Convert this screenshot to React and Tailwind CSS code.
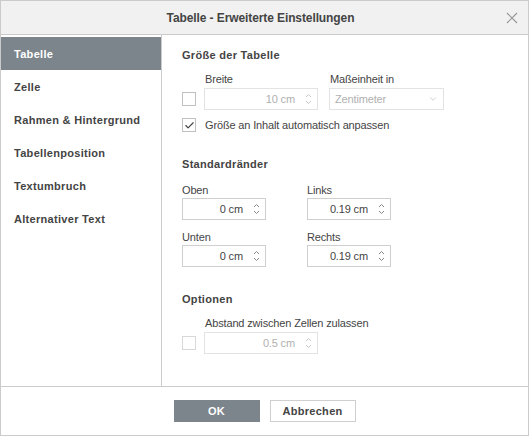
import { ChevronDown, Check } from 'lucide-react';

const menu = ['Tabelle', 'Zelle', 'Rahmen & Hintergrund', 'Tabellenposition', 'Textumbruch', 'Alternativer Text'];

function Spin({ value, width = 'w-[84px]', disabled = false }) {
  return (
    <div
      className={`flex items-center h-[22px] ${width} border ${
        disabled ? 'border-[#e3e3e3] text-[#b0b0b0]' : 'border-[#cfcfcf] text-[#444]'
      } bg-white`}
    >
      <span className="flex-1 text-right pr-[6px]">{value}</span>
      <div className={`flex flex-col items-center justify-center w-[14px] mr-[2px] leading-none ${disabled ? 'text-[#c8c8c8]' : 'text-[#888]'}`}>
        <svg width="7" height="5" viewBox="0 0 7 5"><path d="M1 4 L3.5 1.5 L6 4" fill="none" stroke="currentColor" strokeWidth="1" /></svg>
        <svg width="7" height="5" viewBox="0 0 7 5" className="mt-[2px]"><path d="M1 1 L3.5 3.5 L6 1" fill="none" stroke="currentColor" strokeWidth="1" /></svg>
      </div>
    </div>
  );
}

function Box({ checked = false, disabled = false }) {
  return (
    <div
      className={`w-[14px] h-[14px] border flex items-center justify-center bg-white ${
        disabled ? 'border-[#d8d8d8]' : 'border-[#c0c0c0]'
      }`}
    >
      {checked && <Check size={11} strokeWidth={2.5} className="text-[#444]" />}
    </div>
  );
}

export default function App() {
  return (
    <div
      className="w-[529px] h-[436px] bg-white border border-[#cbcbcb] flex flex-col text-[11px] leading-[14px] text-[#444] tracking-[-0.15px]"
      style={{ fontFamily: '"Liberation Sans", Arial, sans-serif' }}
    >
      <div className="h-[34px] shrink-0 bg-[#f1f1f1] border-b border-[#cbcbcb] flex items-center relative">
        <div className="flex-1 text-center pr-[8px] font-bold text-[12px] tracking-[-0.1px] text-[#444]">Tabelle - Erweiterte Einstellungen</div>
        <svg className="absolute right-[10px] top-[11px]" width="12" height="12" viewBox="0 0 12 12">
          <path d="M1 1 L11 11 M11 1 L1 11" stroke="#999" strokeWidth="1.2" />
        </svg>
      </div>

      <div className="flex flex-1 border-b border-[#cbcbcb]">
        <div className="w-[161px] border-r border-[#cbcbcb] pt-[2px]">
          {menu.map((m, i) => (
            <div
              key={m}
              className={`h-[33px] flex items-center pl-[13px] font-bold tracking-[0.3px] ${
                i === 0 ? 'bg-[#7d858c] text-white' : 'text-[#444]'
              }`}
            >
              {m}
            </div>
          ))}
        </div>

        <div className="flex-1 pl-[20px] pt-[13px]">
          <div className="font-bold tracking-[0.3px]">Größe der Tabelle</div>
          <div className="flex mt-[10px]">
            <div className="w-[23px]" />
            <div className="w-[125px]">Breite</div>
            <div>Maßeinheit in</div>
          </div>
          <div className="flex items-center mt-[2px]">
            <div className="w-[22px]"><Box /></div>
            <Spin value="10 cm" width="w-[114px]" disabled />
            <div className="ml-[11px] w-[115px] h-[22px] border border-[#e3e3e3] flex items-center pl-[5px] text-[#b0b0b0]">
              <span className="flex-1">Zentimeter</span>
              <ChevronDown size={10} className="mr-[5px] text-[#c8c8c8]" />
            </div>
          </div>
          <div className="flex items-center mt-[8px]">
            <div className="w-[23px]"><Box checked /></div>
            <span>Größe an Inhalt automatisch anpassen</span>
          </div>

          <div className="font-bold tracking-[0.3px] mt-[25px]">Standardränder</div>
          <div className="flex mt-[12px]">
            <div className="w-[125px]">
              <div>Oben</div>
              <div className="mt-[1px]"><Spin value="0 cm" /></div>
              <div className="mt-[10px]">Unten</div>
              <div className="mt-[1px]"><Spin value="0 cm" /></div>
            </div>
            <div>
              <div>Links</div>
              <div className="mt-[1px]"><Spin value="0.19 cm" /></div>
              <div className="mt-[10px]">Rechts</div>
              <div className="mt-[1px]"><Spin value="0.19 cm" /></div>
            </div>
          </div>

          <div className="font-bold tracking-[0.3px] mt-[25px]">Optionen</div>
          <div className="flex mt-[10px]">
            <div className="w-[23px]" />
            <div>Abstand zwischen Zellen zulassen</div>
          </div>
          <div className="flex items-center mt-[2px]">
            <div className="w-[22px]"><Box disabled /></div>
            <Spin value="0.5 cm" width="w-[114px]" disabled />
          </div>
        </div>
      </div>

      <div className="h-[48px] shrink-0 flex items-center justify-center gap-[10px]">
        <button className="w-[86px] h-[22px] bg-[#7d858c] text-white font-bold tracking-[0.3px]">OK</button>
        <button className="w-[86px] h-[22px] border border-[#cfcfcf] bg-white font-bold tracking-[0.3px] text-[#444]">Abbrechen</button>
      </div>
    </div>
  );
}
